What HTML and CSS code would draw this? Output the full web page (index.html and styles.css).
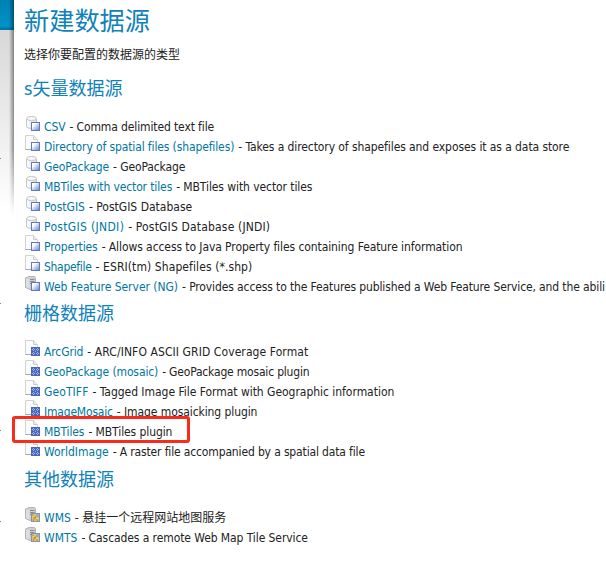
FILE: index.html
```
<!DOCTYPE html>
<html lang="zh">
<head>
<meta charset="utf-8">
<title>新建数据源</title>
<link rel="stylesheet" href="styles.css">
</head>
<body>
<svg class="defs" aria-hidden="true">
  <defs>
    <linearGradient id="blue" x1="0" y1="0" x2="1" y2="1"><stop offset="0.3" stop-color="#fff"/><stop offset="0.6" stop-color="#b4c6f0"/><stop offset="1" stop-color="#6488dc"/></linearGradient>
    <linearGradient id="grey" x1="0" y1="0" x2="1" y2="0"><stop offset="0" stop-color="#fff"/><stop offset="1" stop-color="#d8d8d8"/></linearGradient>
    <symbol id="vec" viewBox="0 0 16 16"><rect x="7.500" y="7.500" width="8" height="8" fill="url(#blue)" stroke="#6078bc"/></symbol>
    <symbol id="ras" viewBox="0 0 16 16"><rect x="7" y="7" width="9" height="9" fill="#4a66b8"/><path d="M9 8h1v1h-1zM13 8h1v1h-1zM8 9h1v1h-1zM10 9h1v1h-1zM12 9h1v1h-1zM14 9h1v1h-1zM9 10h1v1h-1zM13 10h1v1h-1zM11 11h1v1h-1zM9 12h1v1h-1zM13 12h1v1h-1zM8 13h1v1h-1zM10 13h1v1h-1zM12 13h1v1h-1zM14 13h1v1h-1zM9 14h1v1h-1zM13 14h1v1h-1z" fill="#a3b5e5"/></symbol>
    <symbol id="db" viewBox="0 0 16 16"><path d="M2.500 3.500v8c0 2.500 10 2.500 10 0v-8" fill="url(#grey)" stroke="#c4c4c4"/><ellipse cx="7.500" cy="3.500" rx="5" ry="2" fill="#f8f8f8" stroke="#c4c4c4"/><use href="#vec"/></symbol>
    <symbol id="page" viewBox="0 0 16 16"><path d="M1.500 .5h8l4 4v10h-12z" fill="#fcfcfc" stroke="#d2d2d2"/><path d="M1.500 14.500h6" stroke="#aaa"/><path d="M9.500 .5v4h4" fill="#eee" stroke="#ccc"/></symbol>
    <symbol id="file" viewBox="0 0 16 16"><use href="#page"/><use href="#vec"/></symbol>
    <symbol id="grid" viewBox="0 0 16 16"><use href="#page"/><use href="#ras"/></symbol>
    <symbol id="box" viewBox="0 0 16 16"><path d="M1.500 3L5 1.500h5.500l1 1v10.500L6 14.500l-4.500-2z" fill="#cfcfcf" stroke="#b4b4b4"/><path d="M2 3.500l3.500 .5v9.500L2 12z" fill="#dedede"/><path d="M6 4.500h4.500M6 6.500h4.500M6 8.500h3" stroke="#8c8c8c"/></symbol>
    <symbol id="srv" viewBox="0 0 16 16"><use href="#box"/><use href="#vec"/></symbol>
    <symbol id="map" viewBox="0 0 16 16"><use href="#box"/><rect x="7.500" y="7.500" width="8" height="8" fill="#c4d070" stroke="#8c90b4"/><path d="M12 8h3v3h-2z" fill="#86b4e4"/><path d="M8.500 8.500l1.500 3 2 .5 1.500 3M9 15l1.500-3L13 9.500" fill="none" stroke="#e8704c"/><path d="M9 10h1v1h-1zM12 12h2v1h-2z" fill="#f9dc3c"/></symbol>
  </defs>
</svg>
<div class="banner"></div>
<div class="side"><i class="t1"></i><i class="t2"></i><i class="t3"></i><i class="t4"></i></div>
<main class="page">
  <h1>新建数据源</h1>
  <p>选择你要配置的数据源的类型</p>
  <h2>s矢量数据源</h2>
  <ul>
    <li><svg><use href="#db"/></svg><a class="snug">CSV</a><span class="snug">- Comma delimited text file</span></li>
    <li><svg><use href="#file"/></svg><a class="snug">Directory of spatial files (shapefiles)</a><span class="close">- Takes a directory of shapefiles and exposes it as a data store</span></li>
    <li><svg><use href="#db"/></svg><a class="snug">GeoPackage</a><span class="snug">- GeoPackage</span></li>
    <li><svg><use href="#db"/></svg><a class="snug">MBTiles with vector tiles</a><span class="close">- MBTiles with vector tiles</span></li>
    <li><svg><use href="#db"/></svg><a>PostGIS</a><span>- PostGIS Database</span></li>
    <li><svg><use href="#db"/></svg><a class="airy">PostGIS (JNDI)</a><span class="loose">- PostGIS Database (JNDI)</span></li>
    <li><svg><use href="#file"/></svg><a class="close">Properties</a><span class="close">- Allows access to Java Property files containing Feature information</span></li>
    <li><svg><use href="#file"/></svg><a class="tight">Shapefile</a><span class="open">- ESRI(tm) Shapefiles (*.shp)</span></li>
    <li><svg><use href="#srv"/></svg><a class="even">Web Feature Server (NG)</a><span class="snug">- Provides access to the Features published a Web Feature Service, and the abili</span></li>
  </ul>
  <h2>栅格数据源</h2>
  <ul>
    <li><svg><use href="#grid"/></svg><a class="snug">ArcGrid</a><span class="open">- ARC/INFO ASCII GRID Coverage Format</span></li>
    <li><svg><use href="#grid"/></svg><a class="snug">GeoPackage (mosaic)</a><span class="tighter">- GeoPackage mosaic plugin</span></li>
    <li><svg><use href="#grid"/></svg><a class="open">GeoTIFF</a><span class="even">- Tagged Image File Format with Geographic information</span></li>
    <li><svg><use href="#grid"/></svg><a class="tighter">ImageMosaic</a><span class="close">- Image mosaicking plugin</span></li>
    <li class="marked"><svg><use href="#grid"/></svg><a class="snug">MBTiles</a><span class="close">- MBTiles plugin</span></li>
    <li><svg><use href="#grid"/></svg><a>WorldImage</a><span class="snugger">- A raster file accompanied by a spatial data file</span></li>
  </ul>
  <h2 class="last">其他数据源</h2>
  <ul>
    <li><svg><use href="#map"/></svg><a>WMS</a><span>- 悬挂一个远程网站地图服务</span></li>
    <li><svg><use href="#map"/></svg><a>WMTS</a><span class="close">- Cascades a remote Web Map Tile Service</span></li>
  </ul>
</main>
</body>
</html>
```
FILE: styles.css
```
*, *::before, *::after { box-sizing: border-box; }
body {
  margin: 0;
  width: 606px;
  height: 567px;
  overflow: hidden;
  background: #fff;
  color: #222;
  font: 12px/20px "DejaVu Sans Condensed", "Noto Sans CJK SC", sans-serif;
  display: grid;
  grid-template: 30px 1fr / 14px 592px;
}
.defs { position: absolute; width: 0; height: 0; }
.banner { grid-area: 1 / 1; background: linear-gradient(#0080b4, #0092c8 27px, #0076a5 28px); }
.side { grid-area: 2 / 1; position: relative; background: linear-gradient(#d8d8d8, #fff 180px); }
.side i { position: absolute; left: 0; width: 1px; height: 1px; background: #8a8a70; }
.t1 { top: 128px; }
.t2 { top: 273px; }
.t3 { top: 400px; }
.t4 { top: 491px; }
.page { grid-area: 1 / 2 / 3 / 3; position: relative; background: #fff; padding-left: 10px; }
.page::before {
  content: "";
  position: absolute;
  left: -5px;
  top: 0;
  width: 5px;
  height: 215px;
  background: linear-gradient(90deg, transparent, rgba(0, 0, 0, .42));
  -webkit-mask-image: linear-gradient(#000 150px, transparent);
}
h1, h2 { margin: 0; color: #0f82ba; font-weight: 400; }
h1 { font-size: 25.200px; line-height: 42px; height: 44px; padding-top: 1px; }
p { margin: 0; height: 31px; padding-top: 1px; }
h2 { font-size: 18px; line-height: 28px; height: 42px; }
.last { height: 43px; padding-top: 1px; }
ul { list-style: none; margin: 0 0 3px; padding: 0; }
li { height: 20px; display: flex; white-space: nowrap; position: relative; }
li svg { width: 16px; height: 16px; margin: -2px 4px 0 0; flex: none; }
a { color: #0076a1; margin-right: 4px; }
.tight { letter-spacing: -.3px; }
.tighter { letter-spacing: -.19px; }
.snugger { letter-spacing: -.145px; }
.snug { letter-spacing: -.12px; }
.close { letter-spacing: -.085px; }
.even { letter-spacing: -.03px; }
.open { letter-spacing: .09px; }
.loose { letter-spacing: .17px; }
.airy { letter-spacing: .33px; }
.marked::after {
  content: "";
  position: absolute;
  z-index: 1;
  left: -12px;
  top: -6px;
  width: 178px;
  height: 27px;
  border: 3px solid #fb2b1c;
  border-radius: 3px;
}
```
